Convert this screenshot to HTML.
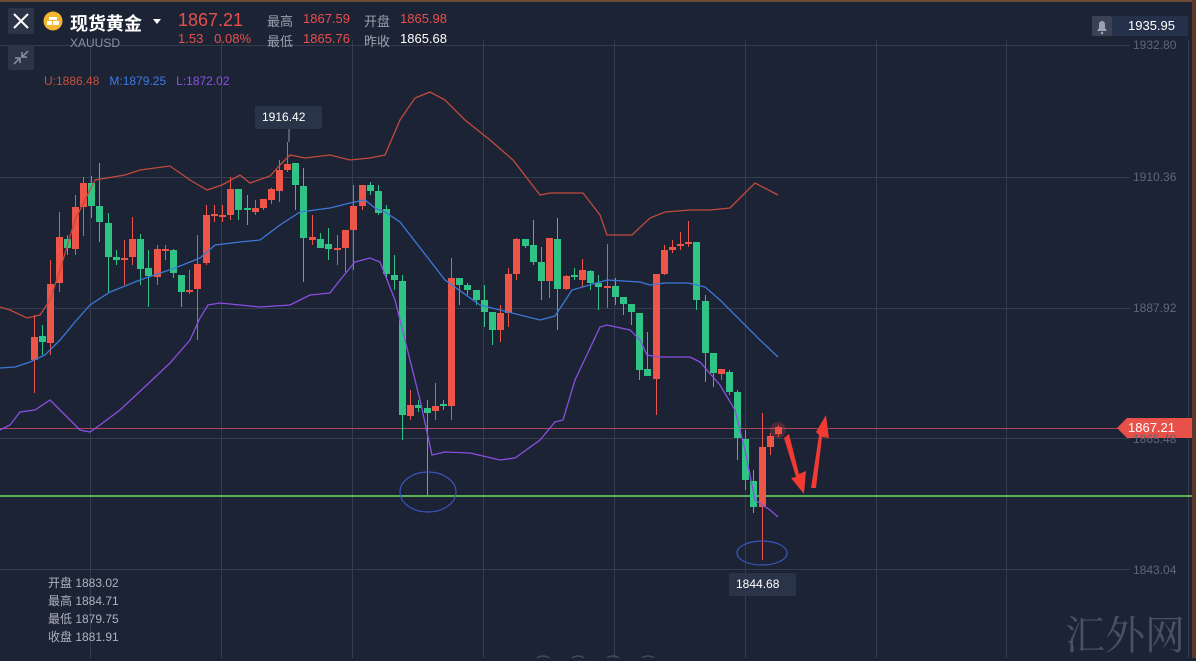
<!DOCTYPE html>
<html><head><meta charset="utf-8"><style>
body{margin:0;width:1196px;height:658px;overflow:hidden;background:#1c2335;font-family:"Liberation Sans","Noto Sans CJK SC",sans-serif;}
.t{position:absolute;white-space:nowrap;}
</style></head><body>
<div style="position:absolute;left:0;top:0;width:1196px;height:658px;">
<svg id="s" width="1196" height="658" style="position:absolute;left:0;top:0">
<rect x="0" y="0" width="1196" height="658" fill="#1c2335"/>
<rect x="0" y="0" width="1196" height="2" fill="#6a4a32"/>
<rect x="1192" y="0" width="4" height="658" fill="#5a3a26"/>
<g stroke="#343c50" stroke-width="1">
<line x1="0" y1="45.5" x2="1130" y2="45.5"/><line x1="0" y1="177.5" x2="1130" y2="177.5"/>
<line x1="0" y1="308.5" x2="1130" y2="308.5"/><line x1="0" y1="438.5" x2="1130" y2="438.5"/>
<line x1="0" y1="569.5" x2="1130" y2="569.5"/>
<line x1="90.5" y1="40" x2="90.5" y2="658"/><line x1="221.5" y1="40" x2="221.5" y2="658"/>
<line x1="352.5" y1="40" x2="352.5" y2="658"/><line x1="483.5" y1="40" x2="483.5" y2="658"/>
<line x1="614.5" y1="40" x2="614.5" y2="658"/><line x1="745.5" y1="40" x2="745.5" y2="658"/>
<line x1="876.5" y1="40" x2="876.5" y2="658"/><line x1="1006.5" y1="40" x2="1006.5" y2="658"/>
<line x1="1188.5" y1="40" x2="1188.5" y2="658"/>
</g>
<line x1="0" y1="428.5" x2="1120" y2="428.5" stroke="#b0445a" stroke-width="1"/>
<line x1="0" y1="496" x2="1192" y2="496" stroke="#6fe060" stroke-width="1.5"/>
<g id="c"></g>
<g fill="none" stroke-width="1.3">
<polyline stroke="#c24a3c" points="0,307 10,310 27,318 40,315 50,300 60,270 75,220 95,180 125,175 140,170 170,166 190,180 207,190 222,185 240,175 250,183 270,176 280,165 290,155 305,158 330,155 350,160 370,158 385,155 400,120 415,98 430,92 445,100 465,120 490,140 513,160 540,195 550,193 583,193 600,215 607,235 632,235 650,218 665,212 690,210 710,210 730,208 748,190 755,183 778,195"/>
<polyline stroke="#3d78d8" points="0,368 15,367 30,362 45,355 60,340 75,322 90,305 110,292 140,280 175,268 200,258 215,245 240,242 260,240 280,225 300,212 330,208 350,203 365,200 375,208 385,212 400,222 445,280 480,305 540,320 555,316 572,290 607,280 640,282 650,285 665,283 688,283 705,287 720,300 740,320 760,340 778,357"/>
<polyline stroke="#8a4fe0" points="0,430 10,425 20,412 35,410 50,400 65,415 80,430 90,432 100,425 120,410 150,382 170,363 190,340 200,318 208,305 220,303 240,305 260,307 290,305 300,300 310,295 330,293 340,280 355,262 370,258 380,262 395,300 405,340 420,400 432,455 445,452 470,453 500,460 515,458 540,440 555,422 563,420 575,380 600,327 607,325 630,330 640,340 647,355 658,357 690,357 700,362 720,385 735,410 745,450 755,500 770,510 778,517"/>
</g>
<ellipse cx="428" cy="492" rx="28" ry="20" fill="none" stroke="#3a55b8" stroke-width="1.2"/>
<ellipse cx="762" cy="553" rx="25" ry="12" fill="none" stroke="#3a55b8" stroke-width="1.2"/>
<circle cx="778" cy="430" r="8" fill="#e04040" opacity="0.25"/>
<polygon fill="#f03a32" points="784,438 789,434 799,474 806,471 804,494 791,478 796,477"/>
<polygon fill="#f03a32" points="811,488 816,488 822,437 829,438 826,415 816,432 819,435"/>
<line x1="289" y1="129" x2="289" y2="142" stroke="#8a93a6"/>
<rect x="255" y="106" width="67" height="23" rx="2" fill="#2a3448"/>
<rect x="729" y="573" width="67" height="23" rx="2" fill="#2a3448"/>
<polygon points="1117,428 1127,418 1192,418 1192,438 1127,438" fill="#e8514a"/>
<rect x="8" y="8" width="26" height="26" rx="2" fill="#2c3447"/>
<path d="M14,14 L28,28 M28,14 L14,28" stroke="#fff" stroke-width="2"/>
<rect x="8" y="45" width="26" height="25" rx="2" fill="#2c3447"/>
<path d="M14,64 L19,59 M15,58 L20,58 L20,63 M28,51 L23,56 M22,52 L22,57 L27,57" stroke="#8a93a6" stroke-width="1.5" fill="none"/>
<circle cx="53" cy="21" r="9.5" fill="#f2b630"/>
<rect x="49" y="17" width="8" height="3" fill="#fff"/><rect x="47" y="21" width="5" height="4" fill="#fff"/><rect x="53" y="21" width="6" height="4" fill="#fff"/>
<polygon points="153,19 161,19 157,24" fill="#fff"/>
<rect x="1092" y="16" width="20" height="20" rx="2" fill="#3a4254"/>
<path d="M1097,31 L1107,31 L1105,28 L1105,24 A3,3 0 0 0 1099,24 L1099,28 Z" fill="#9aa2b2"/><circle cx="1102" cy="33" r="1.3" fill="#9aa2b2"/>
<rect x="1112" y="16" width="76" height="20" fill="#25304a"/>
<g fill="none" stroke="#4a5060" stroke-width="1.2">
<circle cx="543" cy="666" r="10"/><circle cx="578" cy="666" r="10"/><circle cx="613" cy="666" r="10"/><circle cx="648" cy="666" r="10"/></g>
</svg>
<div class="t" style="left:70px;top:10px;font-size:18px;color:#fff;font-weight:bold">现货黄金</div>
<div class="t" style="left:70px;top:36px;font-size:12px;color:#8a91a0">XAUUSD</div>
<div class="t" style="left:178px;top:10px;font-size:18px;color:#e8504a">1867.21</div>
<div class="t" style="left:178px;top:31px;font-size:13px;color:#e8504a">1.53&nbsp;&nbsp;&nbsp;0.08%</div>
<div class="t" style="left:267px;top:11px;font-size:13px;color:#9aa0ad">最高</div>
<div class="t" style="left:303px;top:11px;font-size:13px;color:#e8504a">1867.59</div>
<div class="t" style="left:364px;top:11px;font-size:13px;color:#9aa0ad">开盘</div>
<div class="t" style="left:400px;top:11px;font-size:13px;color:#e8504a">1865.98</div>
<div class="t" style="left:267px;top:31px;font-size:13px;color:#9aa0ad">最低</div>
<div class="t" style="left:303px;top:31px;font-size:13px;color:#e8504a">1865.76</div>
<div class="t" style="left:364px;top:31px;font-size:13px;color:#9aa0ad">昨收</div>
<div class="t" style="left:400px;top:31px;font-size:13px;color:#fff">1865.68</div>
<div class="t" style="left:44px;top:74px;font-size:12px;"><span style="color:#c8503e">U:1886.48</span>&nbsp;&nbsp;&nbsp;<span style="color:#3d7be0">M:1879.25</span>&nbsp;&nbsp;&nbsp;<span style="color:#8a55e0">L:1872.02</span></div>
<div class="t" style="left:1128px;top:18px;font-size:13px;color:#fff">1935.95</div>
<div class="t" style="left:1133px;top:38px;font-size:12px;color:#5e6678">1932.80</div>
<div class="t" style="left:1133px;top:170px;font-size:12px;color:#5e6678">1910.36</div>
<div class="t" style="left:1133px;top:301px;font-size:12px;color:#5e6678">1887.92</div>
<div class="t" style="left:1133px;top:432px;font-size:12px;color:#5e6678">1865.48</div>
<div class="t" style="left:1133px;top:563px;font-size:12px;color:#5e6678">1843.04</div>
<div class="t" style="left:1128px;top:420px;font-size:13px;color:#fff">1867.21</div>
<div class="t" style="left:262px;top:110px;font-size:12px;color:#fff">1916.42</div>
<div class="t" style="left:736px;top:577px;font-size:12px;color:#fff">1844.68</div>
<div class="t" style="left:48px;top:574px;font-size:12px;color:#aeb3be;line-height:18px">开盘 1883.02<br>最高 1884.71<br>最低 1879.75<br>收盘 1881.91</div>
<div class="t" style="left:1065px;top:604px;font-size:40px;color:#4a5262;font-family:'Noto Serif CJK SC',serif">汇外网</div>
</div>
<script>
var d=[[34,'r',337,360,315,393],[42,'g',336,342,325,355],[50,'r',284,343,260,355],[59,'r',237,283,212,292],[67,'g',239,248,235,255],[75,'r',207,249,195,255],[83,'r',183,207,177,236],[91,'g',183,206,176,218],[99,'g',206,222,163,242],[108,'g',223,257,213,292],[116,'g',257,260,250,265],[124,'r',258,260,240,285],[132,'r',239,257,217,265],[140,'g',239,269,234,285],[148,'g',268,276,250,307],[157,'r',249,277,245,285],[165,'r',249,251,245,260],[173,'g',250,273,249,278],[181,'g',275,292,275,307],[189,'r',290,292,270,294],[197,'r',264,289,235,340],[206,'r',215,263,205,265],[214,'r',214,216,205,222],[222,'r',215,217,205,222],[230,'r',189,215,177,220],[238,'g',189,210,189,220],[247,'g',208,209,195,225],[255,'r',208,212,200,215],[263,'r',199,208,199,210],[271,'r',189,200,188,204],[279,'r',170,191,160,202],[287,'r',164,170,142,172],[295,'g',163,185,163,210],[303,'g',186,238,168,282],[312,'r',237,240,215,245],[320,'g',239,248,233,248],[328,'g',244,249,228,260],[337,'r',248,250,235,265],[345,'r',230,248,230,272],[353,'r',206,230,185,270],[362,'r',185,206,185,210],[370,'g',185,191,182,195],[378,'g',191,213,185,215],[386,'g',209,274,205,280],[394,'g',275,280,255,290],[402,'g',281,415,275,440],[410,'r',405,416,390,420],[418,'g',405,408,400,412],[427,'g',408,413,400,496],[435,'r',406,411,383,420],[443,'g',404,406,400,410],[451,'r',278,406,258,420],[459,'g',278,285,278,305],[467,'g',285,290,283,295],[476,'g',290,300,290,305],[484,'g',300,312,285,327],[492,'g',312,330,312,345],[500,'r',313,330,305,342],[508,'r',274,313,268,327],[516,'r',239,274,238,280],[525,'g',239,246,239,248],[533,'g',245,262,220,265],[541,'g',262,281,247,300],[549,'r',238,281,238,298],[557,'g',239,289,218,330],[566,'r',276,289,275,290],[574,'g',275,277,268,280],[582,'r',270,280,259,287],[590,'g',271,283,270,290],[598,'g',283,287,275,310],[607,'r',286,288,244,308],[615,'g',286,297,278,305],[623,'g',297,304,297,315],[631,'g',304,312,304,325],[639,'g',313,370,313,380],[647,'g',369,376,332,376],[656,'r',274,379,274,415],[664,'r',250,274,245,275],[672,'r',247,250,240,253],[680,'r',244,246,232,250],[688,'r',242,244,221,247],[696,'g',242,300,242,310],[705,'g',301,353,295,382],[713,'g',353,373,353,387],[721,'r',369,374,369,380],[729,'g',372,392,370,395],[737,'g',392,438,390,460],[745,'g',439,480,430,490],[753,'g',481,507,470,513],[762,'r',447,507,413,560],[770,'r',436,447,433,455],[778,'r',427,434,425,437]];
var h='';d.forEach(function(c){var col=c[1]=='r'?'#ec5547':'#2fc486';var y=c[2],b=Math.max(c[3]-c[2],2);
h+='<line x1="'+(c[0]+0.5)+'" y1="'+c[4]+'" x2="'+(c[0]+0.5)+'" y2="'+c[5]+'" stroke="'+col+'" stroke-width="1"/>';
h+='<rect x="'+(c[0]-3)+'" y="'+y+'" width="7" height="'+b+'" fill="'+col+'"/>';});
document.getElementById('c').innerHTML=h;
</script>
</body></html>
